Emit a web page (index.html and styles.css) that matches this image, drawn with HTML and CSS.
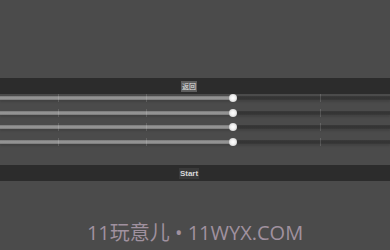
FILE: index.html
```html
<!DOCTYPE html>
<html>
<head>
<meta charset="utf-8">
<link rel="stylesheet" href="styles.css">
</head>
<body>
<div class="page">
  <div class="bar bar-top"><span class="label label-back">返回</span></div>
  <div class="sliders">
    <div class="row"><div class="track"><div class="fill"></div><i class="tick t1"></i><i class="tick t2"></i><i class="tick t4"></i><span class="thumb"></span></div></div>
    <div class="row"><div class="track"><div class="fill"></div><i class="tick t1"></i><i class="tick t2"></i><i class="tick t4"></i><span class="thumb"></span></div></div>
    <div class="row"><div class="track"><div class="fill"></div><i class="tick t1"></i><i class="tick t2"></i><i class="tick t4"></i><span class="thumb"></span></div></div>
    <div class="row"><div class="track"><div class="fill"></div><i class="tick t1"></i><i class="tick t2"></i><i class="tick t4"></i><span class="thumb"></span></div></div>
  </div>
  <div class="bar bar-start"><span class="label label-start">Start</span></div>
  <div class="watermark">11玩意儿 • 11WYX.COM</div>
</div>
</body>
</html>
```
FILE: styles.css
```css
html, body {
  margin: 0;
  padding: 0;
  background: #4b4b4b;
  width: 390px;
  height: 250px;
  overflow: hidden;
}
.page {
  padding-top: 78px;
  font-family: "Liberation Sans", "Noto Sans CJK SC", sans-serif;
}
.bar {
  height: 16px;
  background: #2c2c2c;
  display: flex;
  align-items: center;
  justify-content: center;
}
.label {
  font-size: 8px;
  line-height: 11px;
  height: 11px;
  color: #e6e6e6;
  padding: 0 1px;
  margin-right: 12px;
}
.label-back {
  background: #5e5e5e;
  font-family: "Noto Sans CJK SC", sans-serif;
  font-size: 7px;
}
.label-start {
  background: #3a3a3a;
  font-weight: bold;
  color: #d8d8d8;
}
.sliders {
  display: flex;
  flex-direction: column;
  margin-bottom: 13px;
}
.row {
  height: 14.5px;
  position: relative;
}
.track {
  position: relative;
  margin-top: 2px;
  height: 4px;
  background: linear-gradient(#3a3a3a, #333 50%, #3a3a3a);
  box-shadow: 0 2px 2px rgba(0,0,0,0.12);
}
.fill {
  width: 233px;
  height: 4px;
  background: linear-gradient(#777, #9c9c9c 50%, #777);
}
.tick {
  position: absolute;
  top: -2px;
  width: 1px;
  height: 8px;
  background: rgba(255,255,255,0.14);
}
.t1 { left: 58px; }
.t2 { left: 146px; }
.t4 { left: 320px; }
.thumb {
  position: absolute;
  left: 229px;
  top: -2px;
  width: 8px;
  height: 8px;
  border-radius: 50%;
  background: radial-gradient(circle, #ffffff 0%, #eeeeee 45%, #c8c8c8 80%, rgba(200,200,200,0) 100%);
}
.watermark {
  margin-top: 36px;
  text-align: center;
  font-family: "Open Sans", "Noto Sans CJK SC", sans-serif;
  font-size: 20px;
  color: #a0919f;
  letter-spacing: 0;
}
```
